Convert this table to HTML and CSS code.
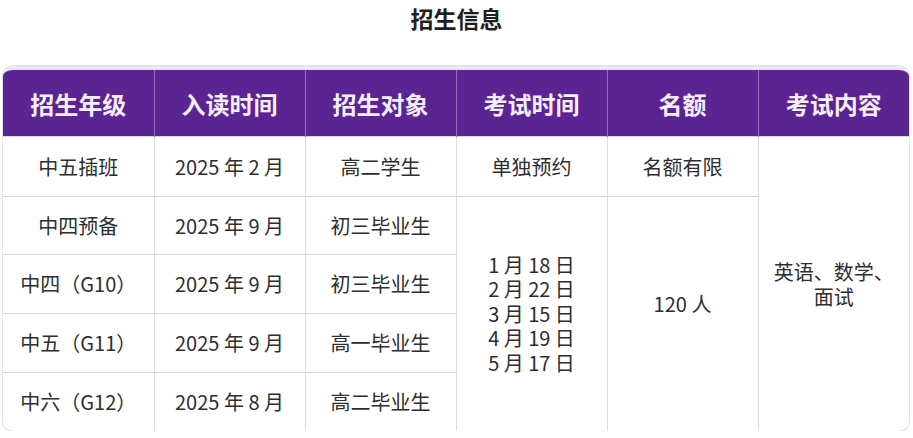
FILE: index.html
```html
<!DOCTYPE html>
<html lang="zh">
<head>
<meta charset="utf-8">
<link rel="stylesheet" href="styles.css">
</head>
<body>
<h1 class="title">招生信息</h1>
<div class="table-wrap">
<table class="info">
<colgroup><col><col><col><col><col><col></colgroup>
<thead>
<tr class="head-row">
<th>招生年级</th><th>入读时间</th><th>招生对象</th><th>考试时间</th><th>名额</th><th>考试内容</th>
</tr>
</thead>
<tbody>
<tr class="r1">
<td>中五插班</td><td>2025 年 2 月</td><td>高二学生</td><td>单独预约</td><td>名额有限</td>
<td rowspan="5" class="content-cell"><div class="content-text">英语、数学、面试</div></td>
</tr>
<tr class="r2">
<td>中四预备</td><td>2025 年 9 月</td><td>初三毕业生</td>
<td rowspan="4" class="dates">1 月 18 日<br>2 月 22 日<br>3 月 15 日<br>4 月 19 日<br>5 月 17 日</td>
<td rowspan="4" class="quota">120 人</td>
</tr>
<tr class="r3">
<td>中四（G10）</td><td>2025 年 9 月</td><td>初三毕业生</td>
</tr>
<tr class="r4">
<td>中五（G11）</td><td>2025 年 9 月</td><td>高一毕业生</td>
</tr>
<tr class="r5">
<td>中六（G12）</td><td>2025 年 8 月</td><td>高二毕业生</td>
</tr>
</tbody>
</table>
</div>
</body>
</html>
```
FILE: styles.css
```css
html, body {
  margin: 0;
  padding: 0;
  background: #ffffff;
}
body {
  font-family: "Noto Sans CJK SC", "Noto Sans", sans-serif;
  color: #333333;
}
.title {
  margin: 0;
  padding-top: 3px;
  height: 66px;
  box-sizing: border-box;
  text-align: center;
  font-size: 23px;
  line-height: 30px;
  font-weight: 700;
  color: #1f1f1f;
}
.table-wrap {
  margin-left: 3px;
  width: 906px;
  border-radius: 10px;
  overflow: hidden;
  box-shadow: 0 0 0 1px #e2e2e2, 0 2px 4px rgba(0,0,0,0.08);
  border-top: 4px solid #efe4f6;
}
.info {
  width: 906px;
  table-layout: fixed;
  border-collapse: collapse;
}
.info col { width: 151px; }
.info th {
  background: #5a2592;
  color: #f6eefc;
  font-size: 24px;
  font-weight: 700;
  height: 66px;
  padding: 0;
  border-left: 1px solid rgba(255,255,255,0.35);
  text-align: center;
}
.info th:first-child { border-left: none; }
.info td {
  padding: 0;
  text-align: center;
  vertical-align: middle;
  font-size: 20px;
  line-height: 24px;
  color: #2e2e2e;
  border-left: 1px solid #dcdcdc;
  border-top: 1px solid #d6d6d6;
}
.info tr td:first-child { border-left: none; }
.r1 td { height: 59px; }
.r2 td { height: 57px; }
.r3 td, .r4 td, .r5 td { height: 58px; }
.info td.dates { line-height: 24.5px; }
.info td.quota { padding-bottom: 20px; }
.info td.content-cell { padding: 0 10px; }
.content-text { line-height: 25px; }
```
